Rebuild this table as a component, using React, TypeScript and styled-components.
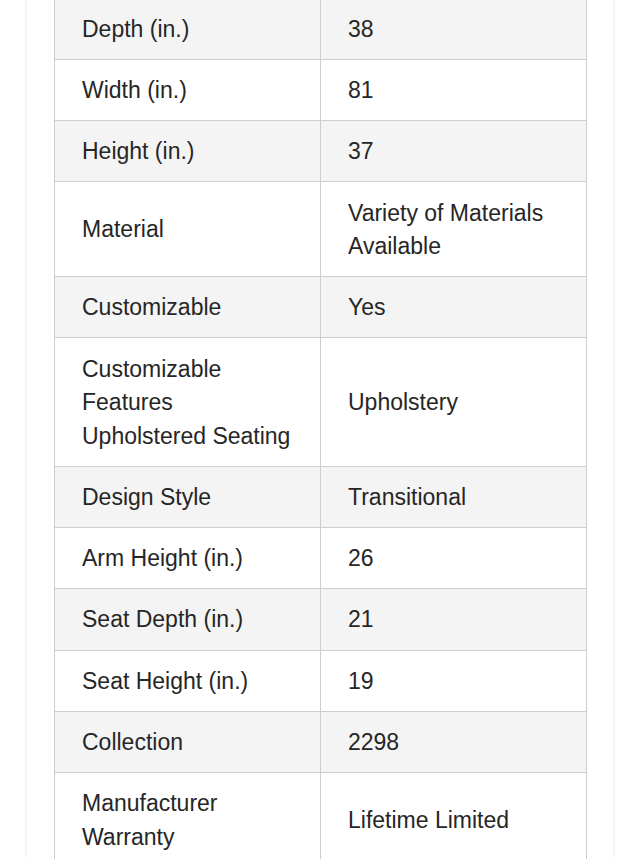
import React from 'react'
import styled, { createGlobalStyle } from 'styled-components'

const GlobalStyle = createGlobalStyle`
  html, body {
    margin: 0;
    padding: 0;
    background: #ffffff;
  }
  body {
    font-family: 'Liberation Sans', Arial, sans-serif;
    color: #222222;
    overflow: hidden;
  }
`

const Page = styled.div`
  width: 640px;
  height: 859px;
  overflow: hidden;
  padding: 0 25px;
  box-sizing: border-box;
`

const Panel = styled.div`
  border-left: 2px solid #f3f3f3;
  border-right: 2px solid #f3f3f3;
  padding: 0 26px 0 27px;
  height: 100%;
  box-sizing: border-box;
`

const SpecTable = styled.table`
  width: 100%;
  margin-top: -2.5px;
  border-collapse: collapse;
  table-layout: fixed;
  font-size: 23px;
  line-height: 33.5px;
  color: #262626;
`

const Row = styled.tr<{ $shaded: boolean }>`
  background: ${(p) => (p.$shaded ? '#f4f4f4' : '#ffffff')};
`

const Cell = styled.td`
  border: 1px solid #cdcdcd;
  padding: 14.2px 16px 12.6px 27px;
  vertical-align: middle;
  width: 50%;
`

const specs: [string, string][] = [
  ['Depth (in.)', '38'],
  ['Width (in.)', '81'],
  ['Height (in.)', '37'],
  ['Material', 'Variety of Materials Available'],
  ['Customizable', 'Yes'],
  ['Customizable Features Upholstered Seating', 'Upholstery'],
  ['Design Style', 'Transitional'],
  ['Arm Height (in.)', '26'],
  ['Seat Depth (in.)', '21'],
  ['Seat Height (in.)', '19'],
  ['Collection', '2298'],
  ['Manufacturer Warranty', 'Lifetime Limited'],
]

const App: React.FC = () => {
  return (
    <>
      <GlobalStyle />
      <Page>
        <Panel>
          <SpecTable>
            <tbody>
              {specs.map(([label, value], i) => (
                <Row key={label} $shaded={i % 2 === 0}>
                  <Cell>{label === 'Customizable Features Upholstered Seating' ? (
                    <>Customizable<br />Features<br />Upholstered Seating</>
                  ) : label}</Cell>
                  <Cell>{value}</Cell>
                </Row>
              ))}
            </tbody>
          </SpecTable>
        </Panel>
      </Page>
    </>
  )
}

export default App
